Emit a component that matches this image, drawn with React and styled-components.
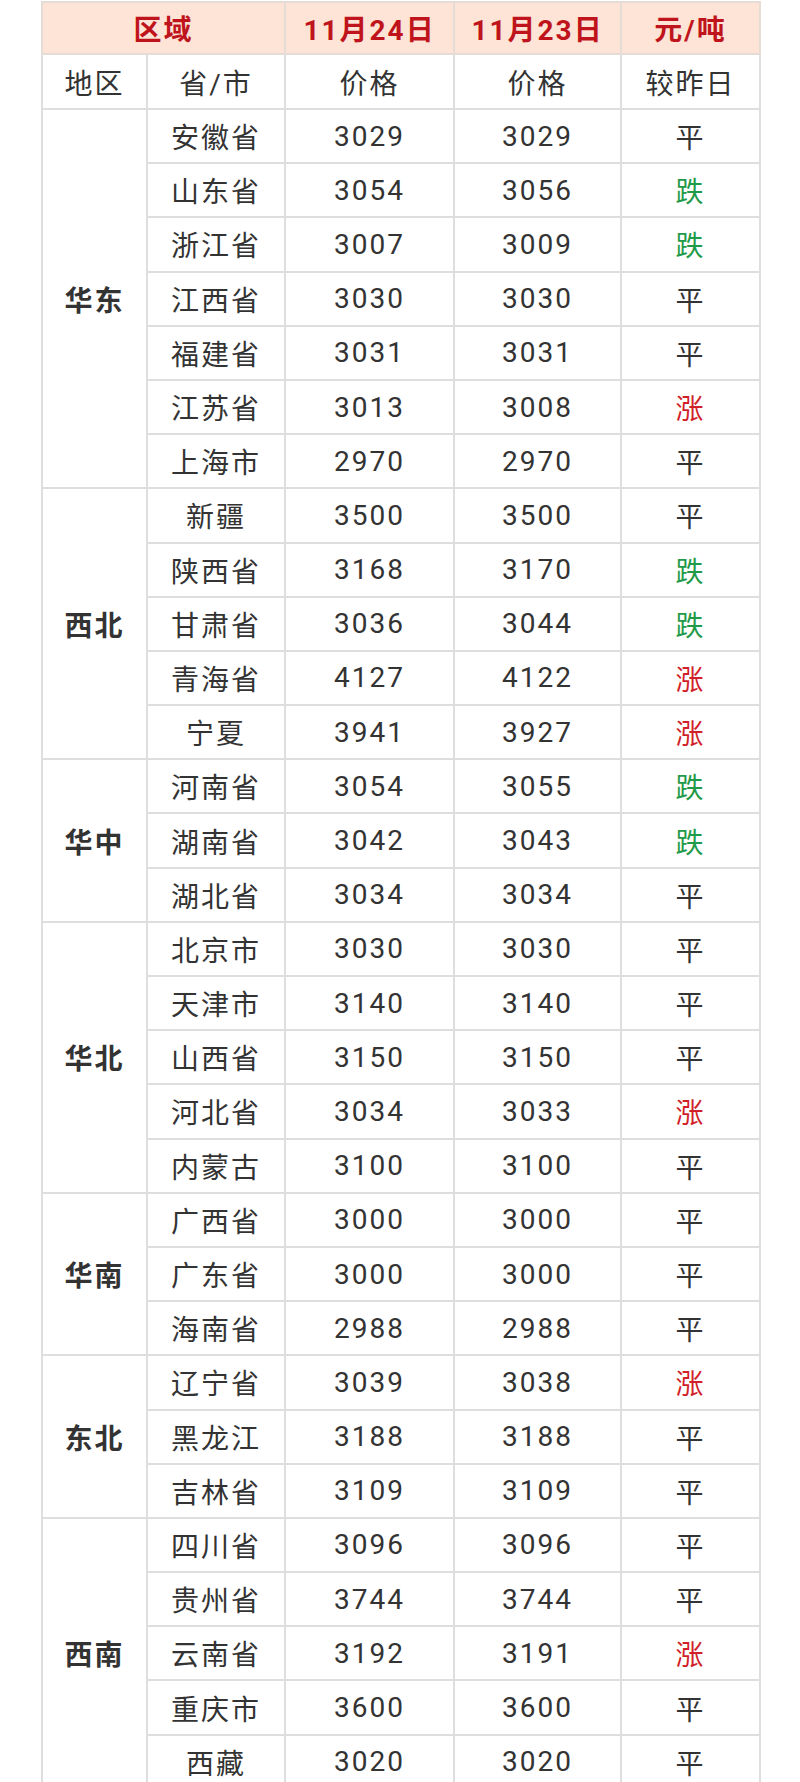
import React from 'react';
import styled, { createGlobalStyle } from 'styled-components';

const GlobalStyle = createGlobalStyle`
  html, body {
    margin: 0;
    padding: 0;
    background: #fff;
  }
  body {
    font-family: Roboto, "Noto Sans CJK SC", sans-serif;
  }
`;

const Page = styled.div`
  padding: 1px 0 0 41px;
`;

const Table = styled.table`
  border-collapse: collapse;
  table-layout: fixed;
  width: 718px;
  color: #333;
  font-size: 28px;
  letter-spacing: 2px;
`;

const Col = styled.col`
  width: ${(p) => p.$w}px;
`;

const HeadCell = styled.th`
  height: 50px;
  padding: 0;
  background: #fde4d6;
  color: #c0141c;
  font-weight: 700;
  text-align: center;
  border: 2px solid #e6dcd6;
`;

const Cell = styled.td`
  height: ${(p) => p.$h || 52.2}px;
  padding: 0;
  text-align: center;
  vertical-align: middle;
  border: 2px solid #dedede;
  font-weight: ${(p) => (p.$bold ? 700 : 400)};
  color: ${(p) => p.$color || '#333'};
`;

const TREND_COLORS = {
  平: '#333',
  跌: '#1e9a48',
  涨: '#d11f2a',
};

const groups = [
  {
    region: '华东',
    rows: [
      ['安徽省', 3029, 3029, '平'],
      ['山东省', 3054, 3056, '跌'],
      ['浙江省', 3007, 3009, '跌'],
      ['江西省', 3030, 3030, '平'],
      ['福建省', 3031, 3031, '平'],
      ['江苏省', 3013, 3008, '涨'],
      ['上海市', 2970, 2970, '平'],
    ],
  },
  {
    region: '西北',
    rows: [
      ['新疆', 3500, 3500, '平'],
      ['陕西省', 3168, 3170, '跌'],
      ['甘肃省', 3036, 3044, '跌'],
      ['青海省', 4127, 4122, '涨'],
      ['宁夏', 3941, 3927, '涨'],
    ],
  },
  {
    region: '华中',
    rows: [
      ['河南省', 3054, 3055, '跌'],
      ['湖南省', 3042, 3043, '跌'],
      ['湖北省', 3034, 3034, '平'],
    ],
  },
  {
    region: '华北',
    rows: [
      ['北京市', 3030, 3030, '平'],
      ['天津市', 3140, 3140, '平'],
      ['山西省', 3150, 3150, '平'],
      ['河北省', 3034, 3033, '涨'],
      ['内蒙古', 3100, 3100, '平'],
    ],
  },
  {
    region: '华南',
    rows: [
      ['广西省', 3000, 3000, '平'],
      ['广东省', 3000, 3000, '平'],
      ['海南省', 2988, 2988, '平'],
    ],
  },
  {
    region: '东北',
    rows: [
      ['辽宁省', 3039, 3038, '涨'],
      ['黑龙江', 3188, 3188, '平'],
      ['吉林省', 3109, 3109, '平'],
    ],
  },
  {
    region: '西南',
    rows: [
      ['四川省', 3096, 3096, '平'],
      ['贵州省', 3744, 3744, '平'],
      ['云南省', 3192, 3191, '涨'],
      ['重庆市', 3600, 3600, '平'],
      ['西藏', 3020, 3020, '平'],
    ],
  },
];

export default function App() {
  return (
    <>
      <GlobalStyle />
      <Page>
        <Table>
          <colgroup>
            <Col $w={105} />
            <Col $w={138} />
            <Col $w={169} />
            <Col $w={167} />
            <Col $w={139} />
          </colgroup>
          <thead>
            <tr>
              <HeadCell colSpan={2}>区域</HeadCell>
              <HeadCell>11月24日</HeadCell>
              <HeadCell>11月23日</HeadCell>
              <HeadCell>元/吨</HeadCell>
            </tr>
            <tr>
              <Cell $h={53}>地区</Cell>
              <Cell $h={53}>省/市</Cell>
              <Cell $h={53}>价格</Cell>
              <Cell $h={53}>价格</Cell>
              <Cell $h={53}>较昨日</Cell>
            </tr>
          </thead>
          <tbody>
            {groups.map((group) =>
              group.rows.map(([name, today, yesterday, trend], i) => (
                <tr key={name}>
                  {i === 0 && (
                    <Cell $bold rowSpan={group.rows.length}>
                      {group.region}
                    </Cell>
                  )}
                  <Cell>{name}</Cell>
                  <Cell>{today}</Cell>
                  <Cell>{yesterday}</Cell>
                  <Cell $color={TREND_COLORS[trend]}>{trend}</Cell>
                </tr>
              ))
            )}
          </tbody>
        </Table>
      </Page>
    </>
  );
}
